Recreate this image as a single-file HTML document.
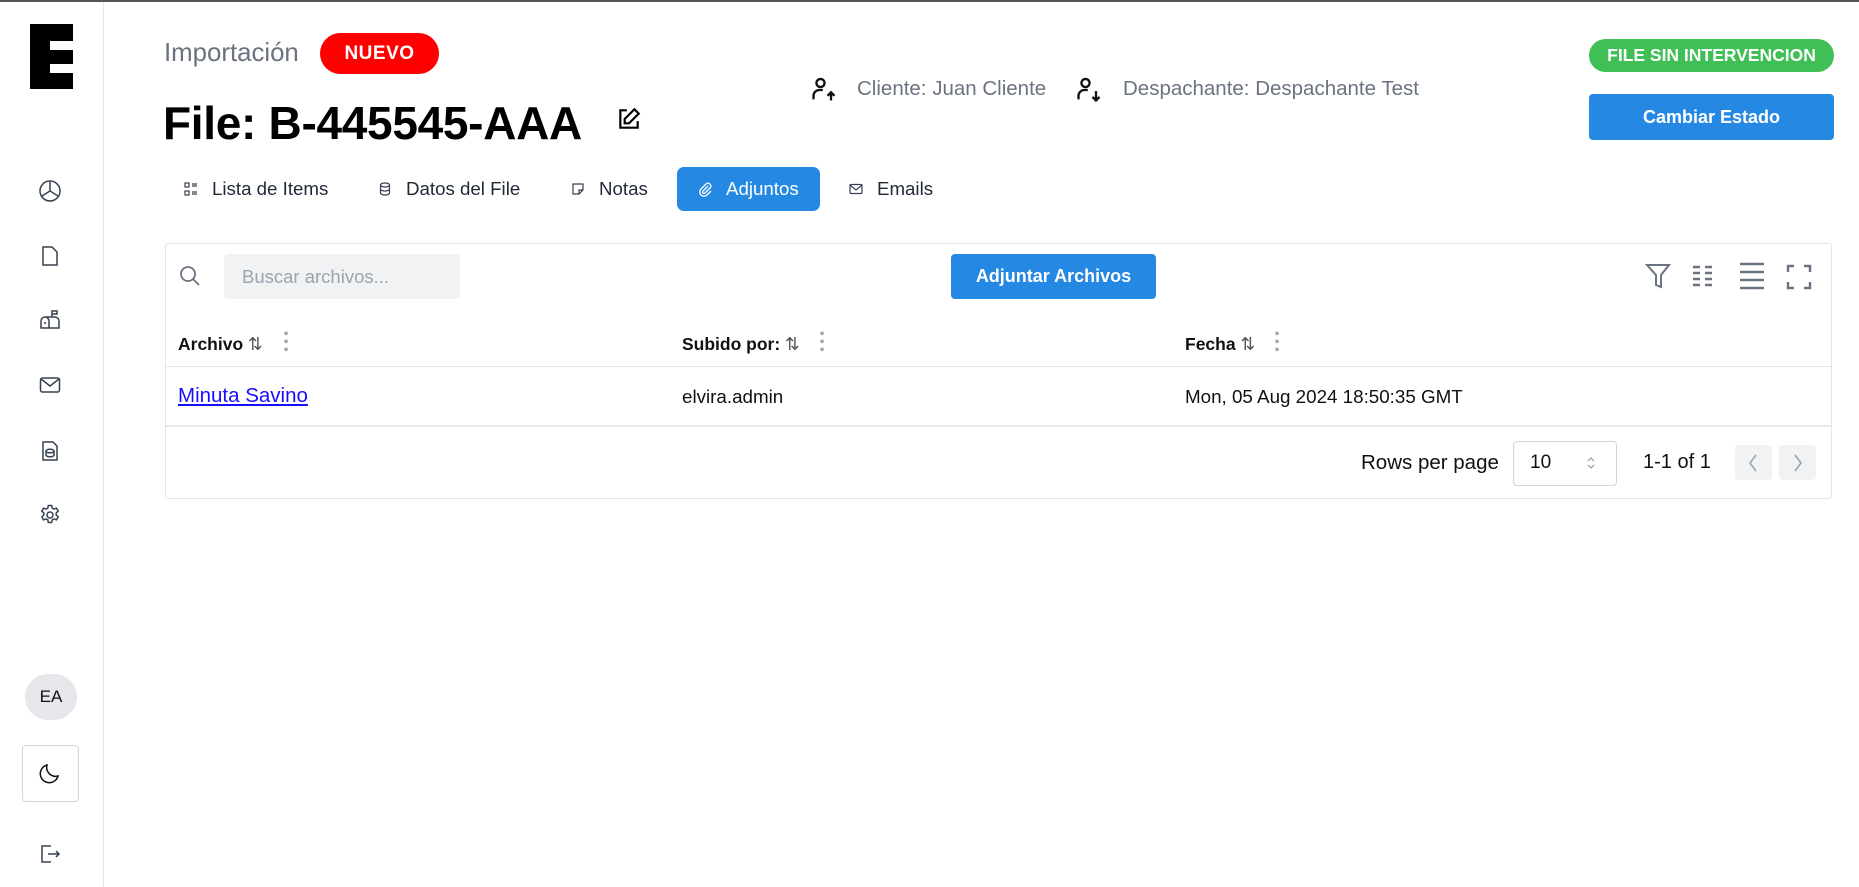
<!DOCTYPE html>
<html><head><meta charset="utf-8"><style>
*{box-sizing:border-box;margin:0;padding:0}
body{width:1859px;height:887px;overflow:hidden;background:#fff;font-family:"Liberation Sans",Arial,sans-serif;position:relative;color:#111}
.a{position:absolute}
.top{left:0;top:0;width:1859px;height:2px;background:#555}
.side{left:0;top:2px;width:104px;height:885px;border-right:1px solid #e5e7eb}
.ic{position:absolute;left:38px;width:24px;height:24px}
svg{display:block}
.t{position:absolute;white-space:nowrap}
.tab{position:absolute;top:167px;height:44px;display:flex;align-items:center;font-size:18.7px;color:#1f2937;gap:13px}
.hd{font-weight:bold;font-size:17.5px;top:334px}
</style></head><body>
<div class="a top"></div>
<div class="a side">
 <div class="a" style="left:30px;top:22px;width:43px;height:65px;background:#000"></div>
 <div class="a" style="left:50px;top:39px;width:23px;height:9px;background:#fff"></div>
 <div class="a" style="left:50px;top:62px;width:23px;height:9px;background:#fff"></div>
 <svg class="ic" style="top:177px" viewBox="0 0 24 24" fill="none" stroke="#374151" stroke-width="1.5"><circle cx="12" cy="12" r="10"/><path d="M12 2v10l8 5M12 12l-8 5"/></svg>
 <svg class="ic" style="top:242px" viewBox="0 0 24 24" fill="none" stroke="#374151" stroke-width="1.5"><path d="M5 3h9l5 5v13H5z"/></svg>
 <svg class="ic" style="top:306px" viewBox="0 0 24 24" fill="none" stroke="#374151" stroke-width="1.5"><path d="M3 20v-7a4 4 0 0 1 8 0v7zM11 20h10v-7a4 4 0 0 0-4-4H7M14 9V3h5v3h-5M6 15h2"/></svg>
 <svg class="ic" style="top:371px" viewBox="0 0 24 24" fill="none" stroke="#374151" stroke-width="1.5"><rect x="2.5" y="5" width="19" height="14" rx="2"/><path d="M3 6l9 7 9-7"/></svg>
 <svg class="ic" style="top:437px" viewBox="0 0 24 24" fill="none" stroke="#374151" stroke-width="1.5"><path d="M5 3h10l4 4v14H5z"/><ellipse cx="12" cy="12" rx="4" ry="1.8"/><path d="M8 12v4c0 1 2 1.8 4 1.8s4-.8 4-1.8v-4"/></svg>
 <svg class="ic" style="top:501px" viewBox="0 0 24 24" fill="none" stroke="#374151" stroke-width="1.5"><circle cx="12" cy="12" r="3"/><path d="M10.3 2.5h3.4l.5 2.6 1.8 1 2.5-.9 1.7 2.9-2 1.8v2.2l2 1.8-1.7 2.9-2.5-.9-1.8 1-.5 2.6h-3.4l-.5-2.6-1.8-1-2.5.9-1.7-2.9 2-1.8v-2.2l-2-1.8 1.7-2.9 2.5.9 1.8-1z"/></svg>
 <div class="a" style="left:25px;top:672px;width:52px;height:46px;border-radius:23px;background:#e5e7eb;font-size:17px;display:flex;align-items:center;justify-content:center;color:#111">EA</div>
 <div class="a" style="left:22px;top:743px;width:57px;height:57px;border:1px solid #d1d5db;border-radius:4px"></div>
 <svg class="ic" style="top:759px" viewBox="0 0 24 24" fill="none" stroke="#111" stroke-width="1.5"><path d="M20 15A9 9 0 0 1 9 4a9 9 0 1 0 11 11z"/></svg>
 <svg class="ic" style="top:840px" viewBox="0 0 24 24" fill="none" stroke="#374151" stroke-width="1.5"><path d="M13 4H4v16h9M10 12h11M18 9l3 3-3 3"/></svg>
</div>

<div class="t" style="left:164px;top:39px;font-size:25.8px;color:#6b7280">Importación</div>
<div class="a" style="left:320px;top:33px;width:119px;height:41px;border-radius:21px;background:#ff0000;color:#fff;font-weight:bold;font-size:19px;display:flex;align-items:center;justify-content:center;letter-spacing:.5px">NUEVO</div>
<div class="t" style="left:163px;top:96px;font-size:46px;font-weight:bold;color:#000;letter-spacing:-0.3px">File: B-445545-AAA</div>
<svg class="a" style="left:616px;top:106px" width="26" height="26" viewBox="0 0 24 24" fill="none" stroke="#000" stroke-width="2"><path d="M10 4H4v16h16v-6M17 3l4 4-9 9H8v-4z"/></svg>

<svg class="a" style="left:810px;top:76px" width="28" height="28" viewBox="0 0 24 24" fill="none" stroke="#111" stroke-width="2"><circle cx="9" cy="6" r="3.5"/><path d="M3 20v-3a5 5 0 0 1 5-5h3M18 21v-7M15 17l3-3 3 3"/></svg>
<div class="t" style="left:857px;top:77px;font-size:20.5px;color:#6b7280">Cliente: Juan Cliente</div>
<svg class="a" style="left:1075px;top:76px" width="28" height="28" viewBox="0 0 24 24" fill="none" stroke="#111" stroke-width="2"><circle cx="9" cy="6" r="3.5"/><path d="M3 20v-3a5 5 0 0 1 5-5h3M18 13v7M15 18l3 3 3-3"/></svg>
<div class="t" style="left:1123px;top:77px;font-size:20.5px;color:#6b7280">Despachante: Despachante Test</div>

<div class="a" style="left:1589px;top:39px;width:245px;height:33px;border-radius:17px;background:#3fbf55;color:#fff;font-weight:bold;font-size:17.5px;display:flex;align-items:center;justify-content:center">FILE SIN INTERVENCION</div>
<div class="a" style="left:1589px;top:94px;width:245px;height:46px;border-radius:4px;background:#2589e3;color:#fff;font-weight:bold;font-size:18px;display:flex;align-items:center;justify-content:center">Cambiar Estado</div>

<div class="tab" style="left:183px"><svg width="16" height="16" viewBox="0 0 16 16" fill="none" stroke="#374151" stroke-width="1.2"><rect x="2" y="2" width="4" height="4"/><rect x="2" y="10" width="4" height="4"/><path d="M9 3h5M9 5h5M9 11h5M9 13h5"/></svg>Lista de Items</div>
<div class="tab" style="left:377px"><svg width="16" height="16" viewBox="0 0 16 16" fill="none" stroke="#374151" stroke-width="1.2"><ellipse cx="8" cy="4" rx="4.5" ry="2"/><path d="M3.5 4v8c0 1.1 2 2 4.5 2s4.5-.9 4.5-2V4M3.5 8c0 1.1 2 2 4.5 2s4.5-.9 4.5-2"/></svg>Datos del File</div>
<div class="tab" style="left:570px"><svg width="16" height="16" viewBox="0 0 16 16" fill="none" stroke="#374151" stroke-width="1.2"><path d="M3 3h10v6l-4 4H3zM9 13V9h4"/></svg>Notas</div>
<div class="a" style="left:677px;top:167px;width:143px;height:44px;border-radius:7px;background:#2589e3"></div>
<div class="tab" style="left:697px;color:#fff"><svg width="16" height="16" viewBox="0 0 16 16" fill="none" stroke="#fff" stroke-width="1.3"><path d="M11 5l-5 5a1.4 1.4 0 0 0 2 2l5.5-5.5a3 3 0 0 0-4-4L4 8a4.2 4.2 0 0 0 6 6l4-4"/></svg>Adjuntos</div>
<div class="tab" style="left:848px"><svg width="16" height="16" viewBox="0 0 16 16" fill="none" stroke="#374151" stroke-width="1.2"><rect x="2" y="3.5" width="12" height="9" rx="1"/><path d="M2.5 4.5L8 9l5.5-4.5"/></svg>Emails</div>

<div class="a" style="left:165px;top:243px;width:1667px;height:256px;border:1px solid #e2e4e8;border-radius:3px"></div>
<svg class="a" style="left:178px;top:264px" width="24" height="24" viewBox="0 0 24 24" fill="none" stroke="#6b7280" stroke-width="1.8"><circle cx="10" cy="10" r="7"/><path d="M15 15l6 6"/></svg>
<div class="a" style="left:224px;top:254px;width:236px;height:45px;border-radius:4px;background:#f1f2f4"></div>
<div class="t" style="left:242px;top:266px;font-size:18.5px;color:#9ca3af">Buscar archivos...</div>
<div class="a" style="left:951px;top:254px;width:205px;height:45px;border-radius:4px;background:#2589e3;color:#fff;font-weight:bold;font-size:18px;display:flex;align-items:center;justify-content:center">Adjuntar Archivos</div>
<svg class="a" style="left:1645px;top:262px" width="26" height="28" viewBox="0 0 26 28" fill="none" stroke="#6b7280" stroke-width="2"><path d="M2 3h22l-8 10v12l-5-2V13z"/></svg>
<svg class="a" style="left:1692px;top:264px" width="26" height="24" viewBox="0 0 26 24" stroke="#6b7280" stroke-width="2.4"><path d="M1 3h7M1 9h7M1 15h7M1 21h7M13 3h7M13 9h7M13 15h7M13 21h7"/></svg>
<svg class="a" style="left:1739px;top:261px" width="26" height="30" viewBox="0 0 26 30" stroke="#6b7280" stroke-width="2.4"><path d="M1 3h24M1 11h24M1 19h24M1 27h24"/></svg>
<svg class="a" style="left:1786px;top:264px" width="26" height="26" viewBox="0 0 26 26" fill="none" stroke="#6b7280" stroke-width="2.4"><path d="M2 8V2h6M18 2h6v6M24 18v6h-6M8 24H2v-6"/></svg>

<div class="t hd" style="left:178px">Archivo <span style="font-weight:normal;color:#555">⇅</span></div>
<div class="t hd" style="left:682px">Subido por: <span style="font-weight:normal;color:#555">⇅</span></div>
<div class="t hd" style="left:1185px">Fecha <span style="font-weight:normal;color:#555">⇅</span></div>
<div class="t" style="left:283px;top:330px;color:#9ca3af;font-size:22px;line-height:8px;font-weight:bold">·<br>·<br>·</div>
<div class="t" style="left:819px;top:330px;color:#9ca3af;font-size:22px;line-height:8px;font-weight:bold">·<br>·<br>·</div>
<div class="t" style="left:1274px;top:330px;color:#9ca3af;font-size:22px;line-height:8px;font-weight:bold">·<br>·<br>·</div>
<div class="a" style="left:166px;top:366px;width:1665px;height:1px;background:#e2e4e8"></div>
<div class="t" style="left:178px;top:384px;font-size:20.5px;color:#1a0dff;text-decoration:underline">Minuta Savino</div>
<div class="t" style="left:682px;top:386px;font-size:18.8px">elvira.admin</div>
<div class="t" style="left:1185px;top:386px;font-size:18.8px">Mon, 05 Aug 2024 18:50:35 GMT</div>
<div class="a" style="left:166px;top:425px;width:1665px;height:2px;background:#e6e7ea"></div>

<div class="t" style="left:1361px;top:451px;font-size:20.5px">Rows per page</div>
<div class="a" style="left:1513px;top:441px;width:104px;height:45px;border:1px solid #d1d5db;border-radius:4px"></div>
<div class="t" style="left:1530px;top:452px;font-size:19px">10</div>
<svg class="a" style="left:1585px;top:453px" width="12" height="20" viewBox="0 0 12 20" fill="none" stroke="#9ca3af" stroke-width="1.3"><path d="M3 8l3-3 3 3M3 12l3 3 3-3"/></svg>
<div class="t" style="left:1643px;top:451px;font-size:20px">1-1 of 1</div>
<div class="a" style="left:1735px;top:445px;width:37px;height:35px;border-radius:4px;background:#f1f2f4"></div>
<div class="a" style="left:1779px;top:445px;width:37px;height:35px;border-radius:4px;background:#f1f2f4"></div>
<svg class="a" style="left:1745px;top:451px" width="16" height="24" viewBox="0 0 16 24" fill="none" stroke="#9ca3af" stroke-width="1.6"><path d="M11 4l-6 8 6 8"/></svg>
<svg class="a" style="left:1790px;top:451px" width="16" height="24" viewBox="0 0 16 24" fill="none" stroke="#9ca3af" stroke-width="1.6"><path d="M5 4l6 8-6 8"/></svg>
</body></html>
